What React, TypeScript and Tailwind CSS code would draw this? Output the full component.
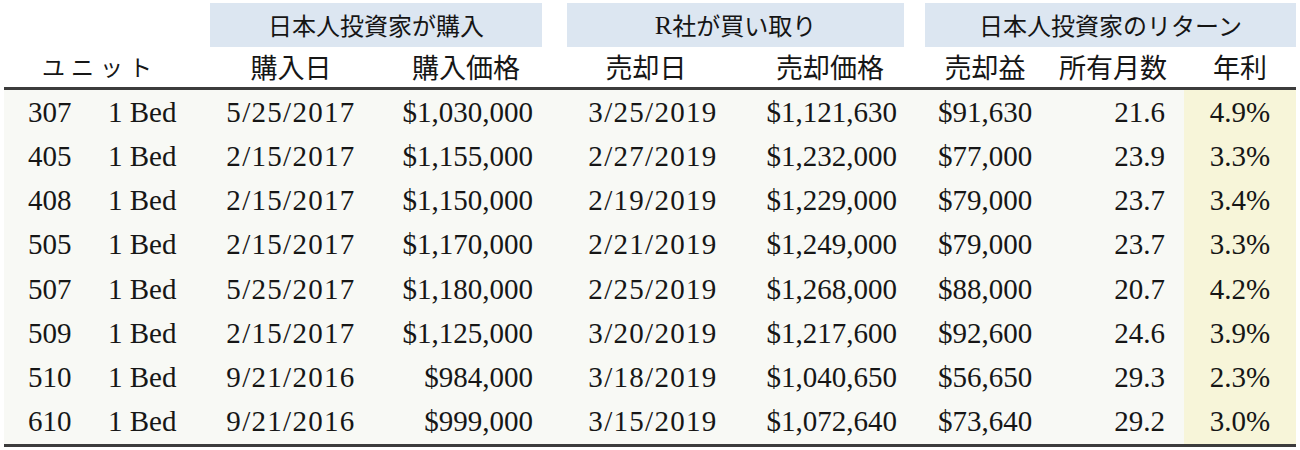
const rows = [
  ['307', '5/25/2017', '$1,030,000', '3/25/2019', '$1,121,630', '$91,630', '21.6', '4.9%'],
  ['405', '2/15/2017', '$1,155,000', '2/27/2019', '$1,232,000', '$77,000', '23.9', '3.3%'],
  ['408', '2/15/2017', '$1,150,000', '2/19/2019', '$1,229,000', '$79,000', '23.7', '3.4%'],
  ['505', '2/15/2017', '$1,170,000', '2/21/2019', '$1,249,000', '$79,000', '23.7', '3.3%'],
  ['507', '5/25/2017', '$1,180,000', '2/25/2019', '$1,268,000', '$88,000', '20.7', '4.2%'],
  ['509', '2/15/2017', '$1,125,000', '3/20/2019', '$1,217,600', '$92,600', '24.6', '3.9%'],
  ['510', '9/21/2016', '$984,000', '3/18/2019', '$1,040,650', '$56,650', '29.3', '2.3%'],
  ['610', '9/21/2016', '$999,000', '3/15/2019', '$1,072,640', '$73,640', '29.2', '3.0%'],
];

const cols = 'grid grid-cols-[91px_115px_162px_170px_25px_172px_165px_21px_120px_139px_112px]';
const jp = "font-['Noto_Sans_CJK_JP','Noto_Sans',sans-serif]";
const serif = "font-['Liberation_Serif','Times_New_Roman',serif]";

function GroupBox({ children }: { children: React.ReactNode }) {
  return (
    <div className={`flex h-[44px] items-center justify-center bg-[#dce6f1] text-[24px] text-[#151515] ${jp}`}>
      {children}
    </div>
  );
}

export default function App() {
  return (
    <div className="h-[450px] w-[1300px] bg-white pl-[4px] pt-[3px] text-[#161616]">
      <div className="w-[1292px]">
        {/* group headings */}
        <div className={cols}>
          <div className="col-span-2" />
          <div className="col-span-2">
            <GroupBox>日本人投資家が購入</GroupBox>
          </div>
          <div />
          <div className="col-span-2">
            <GroupBox>
              <span className={`${serif} text-[26px]`}>R</span>社が買い取り
            </GroupBox>
          </div>
          <div />
          <div className="col-span-3">
            <GroupBox>日本人投資家のリターン</GroupBox>
          </div>
        </div>

        {/* column headings */}
        <div className={`${cols} h-[43px] items-center border-b-[3px] border-[#3c3c3c] pb-[2px] text-[27px] leading-none ${jp}`}>
          <div className="col-span-2 pl-[38px] text-[23px] tracking-[6px]">ユニット</div>
          <div className="text-center">購入日</div>
          <div className="pr-[22px] text-right">購入価格</div>
          <div />
          <div className="pr-[14px] text-center">売却日</div>
          <div className="pr-[20px] text-right">売却価格</div>
          <div />
          <div className="text-center">売却益</div>
          <div className="pr-[17px] text-right">所有月数</div>
          <div className="text-center">年利</div>
        </div>

        {/* body */}
        <div className={`border-b-[3px] border-[#3c3c3c] bg-[#f8f9f5] text-[29px] leading-none ${serif}`}>
          {rows.map((r) => (
            <div key={r[0]} className={`${cols} h-[44.25px] items-center`}>
              <div className="pl-[24px]">{r[0]}</div>
              <div className="pl-[13px]">1 Bed</div>
              <div className="text-center tracking-[1.3px]">{r[1]}</div>
              <div className="pr-[9px] text-right">{r[2]}</div>
              <div />
              <div className="text-center tracking-[1.3px]">{r[3]}</div>
              <div className="pr-[7px] text-right">{r[4]}</div>
              <div />
              <div className="text-center">{r[5]}</div>
              <div className="pr-[19px] text-right">{r[6]}</div>
              <div className="flex h-full items-center justify-center bg-[#f7f5d9]">{r[7]}</div>
            </div>
          ))}
        </div>
      </div>
    </div>
  );
}
